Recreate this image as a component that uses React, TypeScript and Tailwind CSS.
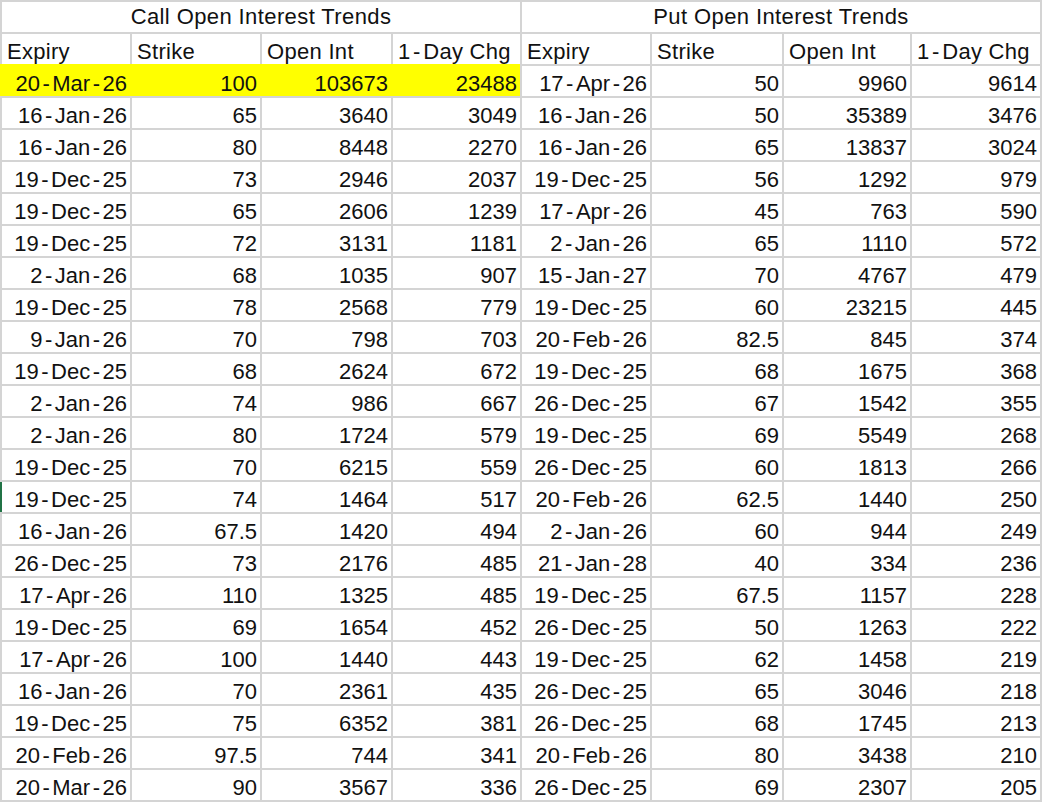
import React from 'react';

type Row = [string, string, string, string];

const calls: Row[] = [
	['20-Mar-26', '100', '103673', '23488'],
	['16-Jan-26', '65', '3640', '3049'],
	['16-Jan-26', '80', '8448', '2270'],
	['19-Dec-25', '73', '2946', '2037'],
	['19-Dec-25', '65', '2606', '1239'],
	['19-Dec-25', '72', '3131', '1181'],
	['2-Jan-26', '68', '1035', '907'],
	['19-Dec-25', '78', '2568', '779'],
	['9-Jan-26', '70', '798', '703'],
	['19-Dec-25', '68', '2624', '672'],
	['2-Jan-26', '74', '986', '667'],
	['2-Jan-26', '80', '1724', '579'],
	['19-Dec-25', '70', '6215', '559'],
	['19-Dec-25', '74', '1464', '517'],
	['16-Jan-26', '67.5', '1420', '494'],
	['26-Dec-25', '73', '2176', '485'],
	['17-Apr-26', '110', '1325', '485'],
	['19-Dec-25', '69', '1654', '452'],
	['17-Apr-26', '100', '1440', '443'],
	['16-Jan-26', '70', '2361', '435'],
	['19-Dec-25', '75', '6352', '381'],
	['20-Feb-26', '97.5', '744', '341'],
	['20-Mar-26', '90', '3567', '336'],
];

const puts: Row[] = [
	['17-Apr-26', '50', '9960', '9614'],
	['16-Jan-26', '50', '35389', '3476'],
	['16-Jan-26', '65', '13837', '3024'],
	['19-Dec-25', '56', '1292', '979'],
	['17-Apr-26', '45', '763', '590'],
	['2-Jan-26', '65', '1110', '572'],
	['15-Jan-27', '70', '4767', '479'],
	['19-Dec-25', '60', '23215', '445'],
	['20-Feb-26', '82.5', '845', '374'],
	['19-Dec-25', '68', '1675', '368'],
	['26-Dec-25', '67', '1542', '355'],
	['19-Dec-25', '69', '5549', '268'],
	['26-Dec-25', '60', '1813', '266'],
	['20-Feb-26', '62.5', '1440', '250'],
	['2-Jan-26', '60', '944', '249'],
	['21-Jan-28', '40', '334', '236'],
	['19-Dec-25', '67.5', '1157', '228'],
	['26-Dec-25', '50', '1263', '222'],
	['19-Dec-25', '62', '1458', '219'],
	['26-Dec-25', '65', '3046', '218'],
	['26-Dec-25', '68', '1745', '213'],
	['20-Feb-26', '80', '3438', '210'],
	['26-Dec-25', '69', '2307', '205'],
];

const heads = ['Expiry', 'Strike', 'Open Int', '1-Day Chg'];

// the sheet font draws a wider dash, so give hyphens some room
const Txt = ({ v }: { v: string }) => {
	const parts = v.split('-');
	return (
		<span className="whitespace-nowrap">
			{parts.map((p, i) => (
				<React.Fragment key={i}>
					{i > 0 && <span className="mx-[2.5px]">-</span>}
					{p}
				</React.Fragment>
			))}
		</span>
	);
};

const Num = ({ v, className = '' }: { v: string; className?: string }) => (
	<div className={`bg-white flex items-end justify-end pr-[3px] ${className}`}>
		<Txt v={v} />
	</div>
);

const Head = ({ v }: { v: string }) => (
	<div className="bg-white flex items-end pl-[5px] tracking-[0.3px]">
		<Txt v={v} />
	</div>
);

export default function App() {
	return (
		<div
			className="w-[1042px] h-[802px] bg-[#d4d4d4] p-[2px] grid grid-cols-[128px_128px_129px_127px_128px_130px_126px_128px] auto-rows-[30px] gap-[2px] text-[22px] leading-[1.15] text-[#111]"
			style={{ fontFamily: '"Liberation Sans", Arial, sans-serif' }}
		>
			{/* titles */}
			<div className="col-span-4 bg-white flex items-center justify-center tracking-[0.4px]">Call Open Interest Trends</div>
			<div className="col-span-4 bg-white flex items-center justify-center tracking-[0.4px]">Put Open Interest Trends</div>

			{heads.map((h) => (
				<Head key={'c' + h} v={h} />
			))}
			{heads.map((h) => (
				<Head key={'p' + h} v={h} />
			))}

			{calls.map((c, i) => {
				const p = puts[i];
				const put = p.map((v, j) => <Num key={'p' + j} v={v} />);
				if (i === 0) {
					// highlighted row, fill covers the gridlines
					return (
						<React.Fragment key={i}>
							<div className="col-span-4 -ml-[2px] -mt-[2px] bg-[#ffff00] grid grid-cols-[130px_130px_131px_129px]">
								{c.map((v, j) => (
									<div key={j} className="flex items-end justify-end pr-[3px]">
										<Txt v={v} />
									</div>
								))}
							</div>
							{put}
						</React.Fragment>
					);
				}
				return (
					<React.Fragment key={i}>
						{c.map((v, j) => (
							<Num key={'c' + j} v={v} className={i === 13 && j === 0 ? '-ml-[2px] border-l-2 border-[#217346]' : ''} />
						))}
						{put}
					</React.Fragment>
				);
			})}
		</div>
	);
}
